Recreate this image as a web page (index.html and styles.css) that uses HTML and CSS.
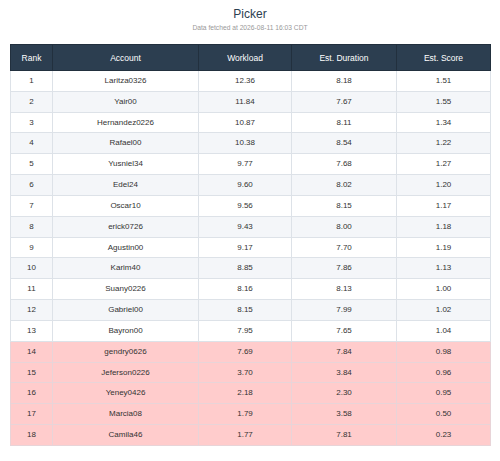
FILE: index.html
```html
<!DOCTYPE html>
<html lang="en">
<head>
    <meta charset="UTF-8">
    <meta name="viewport" content="width=device-width, initial-scale=1.0">
    <title>Picker</title>
    <link rel="stylesheet" href="styles.css">
</head>
<body>
    <div id="title">Picker</div>
    <div id="subtitle">Data fetched at 2026-08-11 16:03 CDT</div>

    <table id="picker-table">
        <colgroup>
            <col class="col-rank">
            <col class="col-account">
            <col class="col-workload">
            <col class="col-duration">
            <col class="col-score">
        </colgroup>
        <thead>
            <tr>
                <th>Rank</th>
                <th>Account</th>
                <th>Workload</th>
                <th>Est. Duration</th>
                <th>Est. Score</th>
            </tr>
        </thead>
        <tbody>
            <tr><td>1</td><td>Laritza0326</td><td>12.36</td><td>8.18</td><td>1.51</td></tr>
            <tr><td>2</td><td>Yair00</td><td>11.84</td><td>7.67</td><td>1.55</td></tr>
            <tr><td>3</td><td>Hernandez0226</td><td>10.87</td><td>8.11</td><td>1.34</td></tr>
            <tr><td>4</td><td>Rafael00</td><td>10.38</td><td>8.54</td><td>1.22</td></tr>
            <tr><td>5</td><td>Yusniel34</td><td>9.77</td><td>7.68</td><td>1.27</td></tr>
            <tr><td>6</td><td>Edel24</td><td>9.60</td><td>8.02</td><td>1.20</td></tr>
            <tr><td>7</td><td>Oscar10</td><td>9.56</td><td>8.15</td><td>1.17</td></tr>
            <tr><td>8</td><td>erick0726</td><td>9.43</td><td>8.00</td><td>1.18</td></tr>
            <tr><td>9</td><td>Agustin00</td><td>9.17</td><td>7.70</td><td>1.19</td></tr>
            <tr><td>10</td><td>Karim40</td><td>8.85</td><td>7.86</td><td>1.13</td></tr>
            <tr><td>11</td><td>Suany0226</td><td>8.16</td><td>8.13</td><td>1.00</td></tr>
            <tr><td>12</td><td>Gabriel00</td><td>8.15</td><td>7.99</td><td>1.02</td></tr>
            <tr><td>13</td><td>Bayron00</td><td>7.95</td><td>7.65</td><td>1.04</td></tr>
            <tr class="low"><td>14</td><td>gendry0626</td><td>7.69</td><td>7.84</td><td>0.98</td></tr>
            <tr class="low"><td>15</td><td>Jeferson0226</td><td>3.70</td><td>3.84</td><td>0.96</td></tr>
            <tr class="low"><td>16</td><td>Yeney0426</td><td>2.18</td><td>2.30</td><td>0.95</td></tr>
            <tr class="low"><td>17</td><td>Marcia08</td><td>1.79</td><td>3.58</td><td>0.50</td></tr>
            <tr class="low"><td>18</td><td>Camila46</td><td>1.77</td><td>7.81</td><td>0.23</td></tr>
        </tbody>
    </table>
</body>
</html>
```

FILE: styles.css
```css
body, html {
    margin: 0;
    padding: 0;
    background-color: #fff;
    font-family: "Liberation Sans", Arial, sans-serif;
}

body {
    padding: 0 10px;
}

#title {
    color: #2c3e50;
    font-size: 12px;
    line-height: 14px;
    text-align: center;
    padding-top: 7px;
}

#subtitle {
    color: #999;
    font-size: 6.7px;
    line-height: 8px;
    text-align: center;
    margin-top: 3px;
}

#picker-table {
    width: 480px;
    margin-top: 12px;
    border-collapse: collapse;
    table-layout: fixed;
}

.col-rank { width: 42px; }
.col-account { width: 146px; }
.col-workload { width: 93px; }
.col-duration { width: 105px; }
.col-score { width: 94px; }

#picker-table thead tr {
    height: 26px;
}

#picker-table tbody tr {
    height: 20.83px;
}

#picker-table th {
    background-color: #2c3e50;
    color: #fff;
    font-size: 8.5px;
    line-height: 10px;
    font-weight: normal;
    padding: 0;
    border: 1px solid #22303e;
    text-align: center;
}

#picker-table td {
    color: #333;
    font-size: 8px;
    line-height: 10px;
    padding: 0;
    border: 1px solid #dde2e8;
    text-align: center;
}

#picker-table tbody tr:nth-child(even) {
    background-color: #f4f6f9;
}

#picker-table tbody tr.low {
    background-color: #ffcccc;
}

#picker-table tbody tr.low td {
    border-color: #e8d4d8;
}
```
